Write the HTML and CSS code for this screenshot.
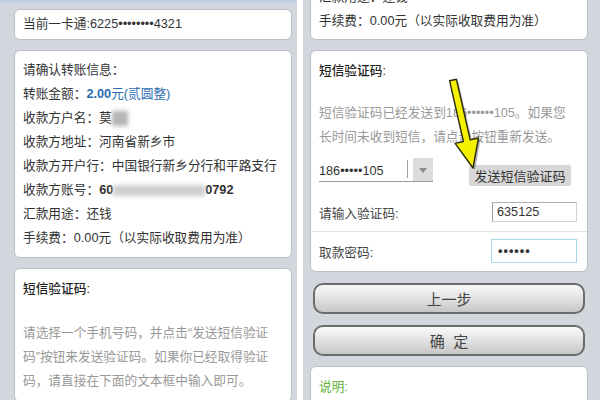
FILE: index.html
```html
<!DOCTYPE html>
<html lang="zh-CN">
<head>
    <meta charset="UTF-8">
    <meta name="viewport" content="width=device-width, initial-scale=1.0">
    <title>转账确认</title>
    <link rel="stylesheet" href="styles.css">
</head>
<body>
    <div class="screen">
        <div class="phone phone-left">
            <div class="status"></div>
            <div class="card card-line">当前一卡通:6225••••••••4321</div>
            <div class="card card-info">
                <p>请确认转账信息：</p>
                <p>转账金额：<span class="amount"><b>2.00</b>元(贰圆整)</span></p>
                <p>收款方户名：莫<span class="blur blur-name"></span></p>
                <p>收款方地址：河南省新乡市</p>
                <p>收款方开户行：中国银行新乡分行和平路支行</p>
                <p>收款方账号：<b>60</b><span class="blur blur-account"></span><b>0792</b></p>
                <p>汇款用途：还钱</p>
                <p>手续费：0.00元（以实际收取费用为准）</p>
            </div>
            <div class="card card-sms">
                <p class="title">短信验证码:</p>
                <p class="hint">请选择一个手机号码，并点击“发送短信验证<br>码”按钮来发送验证码。如果你已经取得验证<br>码，请直接在下面的文本框中输入即可。</p>
            </div>
        </div>
        <div class="gap"></div>
        <div class="phone phone-right">
            <div class="card card-top">
                <p>汇款用途：还钱</p>
                <p>手续费：0.00元（以实际收取费用为准）</p>
            </div>
            <div class="card card-verify">
                <p class="title">短信验证码:</p>
                <p class="hint">短信验证码已经发送到186••••••105。如果您<br>长时间未收到短信，请点击按钮重新发送。</p>
                <div class="row row-send">
                    <div class="spinner">
                        <span class="spinner-text">186•••••105</span>
                        <span class="spinner-arrow"></span>
                    </div>
                    <button class="send">发送短信验证码</button>
                </div>
                <div class="row row-code">
                    <span class="label">请输入验证码:</span>
                    <span class="input">635125</span>
                </div>
                <div class="row row-pass">
                    <span class="label">取款密码:</span>
                    <span class="input input-focus">••••••</span>
                </div>
            </div>
            <button class="big-btn">上一步</button>
            <button class="big-btn">确&nbsp;&nbsp;定</button>
            <div class="card card-note">
                <p>说明:</p>
                <p>1、如果您未收到短信验证码，请点击发送短信</p>
            </div>
            <!-- 标注箭头 -->
            <svg class="arrow" width="297" height="400" viewBox="0 0 297 400">
                <polygon points="148.6,82.8 155.4,81.2 169.2,141.9 177.5,140 172,170 154.1,145.4 162.4,143.5" fill="#333" opacity="0.35"/>
                <polygon points="146.6,80.8 153.4,79.2 167.2,139.9 175.5,138 170,168 152.1,143.4 160.4,141.5" fill="#f4f000" stroke="#2b2b10" stroke-width="1.4" stroke-linejoin="round"/>
            </svg>
        </div>
    </div>
</body>
</html>
```

FILE: styles.css
```css
*{
    margin: 0px;
    padding: 0px;
    box-sizing: border-box;
}
body{
    background: #fff;
    font-family: "Liberation Sans", "Noto Sans CJK SC", sans-serif;
    font-size: 12.7px;
    color: #333;
}
.screen{
    display: flex;
    width: 600px;
    height: 400px;
    overflow: hidden;
}
.phone{
    width: 297px;
    height: 400px;
    overflow: hidden;
    background: #d2d6dd;
}
.phone-left{
    padding: 0px 5px 0px 14px;
}
.phone-right{
    position: relative;
    padding: 0px 12px 0px 7px;
}
.gap{
    width: 6px;
    background: #fff;
}
.status{
    height: 3px;
    margin: 0px -5px 0px -14px;
    background: #bccfe3;
}
.card{
    background: #fff;
    border: 1px solid #bcc1c9;
    border-radius: 6px;
    margin-top: 10px;
}
.card p{
    line-height: 24px;
}
.card-line{
    margin-top: 6px;
    height: 31px;
    line-height: 29px;
    padding-left: 8px;
}
.card-info{
    padding: 7px 8px;
}
.amount{
    color: #2b6cb0;
}
.blur{
    display: inline-block;
    vertical-align: middle;
    filter: blur(2px);
}
.blur-name{
    width: 16px;
    height: 15px;
    background: #b4b4b4;
}
.blur-account{
    width: 92px;
    height: 11px;
    background: #cfcfcf;
}
.card-sms{
    padding: 8px 8px;
}
.title{
    color: #1e1e1e;
    font-weight: 500;
}
.hint{
    color: #999;
}
.card-sms .hint{
    margin-top: 20px;
}
.card-top{
    margin-top: -26px;
    padding: 10px 8px 6px 8px;
}
.card-verify .title{
    margin: 8px 8px 0px 8px;
}
.card-verify .hint{
    margin: 18px 8px 0px 8px;
}
.row{
    display: flex;
    align-items: center;
    justify-content: space-between;
    padding: 0px 10px 0px 8px;
}
.row-send{
    margin-top: 9px;
    height: 28px;
    padding-right: 16px;
    align-items: flex-start;
}
.spinner{
    display: flex;
    width: 114px;
    height: 24px;
    border-bottom: 1px solid #9a9a9a;
}
.spinner-text{
    flex: 1;
    line-height: 22px;
    border-right: 1px solid #a0a0a0;
    margin: 2px 0px 3px 0px;
}
.spinner-arrow{
    width: 20px;
    margin-left: 5px;
    background: #dcdcdc;
    position: relative;
}
.spinner-arrow::after{
    content: "";
    position: absolute;
    left: 6px;
    top: 10px;
    border-left: 4px solid transparent;
    border-right: 4px solid transparent;
    border-top: 5px solid #8a8a8a;
}
.send{
    align-self: flex-end;
    width: 102px;
    height: 21px;
    border: none;
    border-radius: 2px;
    background: #d7d7d7;
    font-family: "Liberation Sans", "Noto Sans CJK SC", sans-serif;
    font-size: 13px;
    color: #333;
}
.row-code{
    margin-top: 16px;
    height: 20px;
}
.label{
    color: #444;
}
.input{
    width: 85px;
    height: 20px;
    line-height: 18px;
    padding-left: 4px;
    border: 1px solid #d4d4d4;
    border-left-color: #9c9c9c;
    border-top-color: #b0b0b0;
}
.row-pass{
    margin-top: 9px;
    border-top: 1px solid #dfe1e4;
    padding-top: 7px;
    padding-bottom: 8px;
    height: 40px;
}
.input-focus{
    width: 86px;
    height: 24px;
    line-height: 22px;
    padding-left: 6px;
    border: 1px solid #a6d8e8;
    letter-spacing: 1px;
    font-weight: bold;
}
.big-btn{
    display: block;
    width: 272px;
    height: 31px;
    margin: 11px 0px 0px 3px;
    border: 2px solid #6c6c6c;
    border-radius: 10px;
    background: linear-gradient(#fafafa, #e4e4e4 45%, #c6c6c6);
    font-family: "Liberation Sans", "Noto Sans CJK SC", sans-serif;
    font-size: 15px;
    color: #444;
}
.card-note{
    padding: 10px 8px 0px 8px;
    height: 60px;
}
.card-note p{
    line-height: 20px;
    color: #64b140;
}
.arrow{
    position: absolute;
    left: 0px;
    top: 0px;
}
```
